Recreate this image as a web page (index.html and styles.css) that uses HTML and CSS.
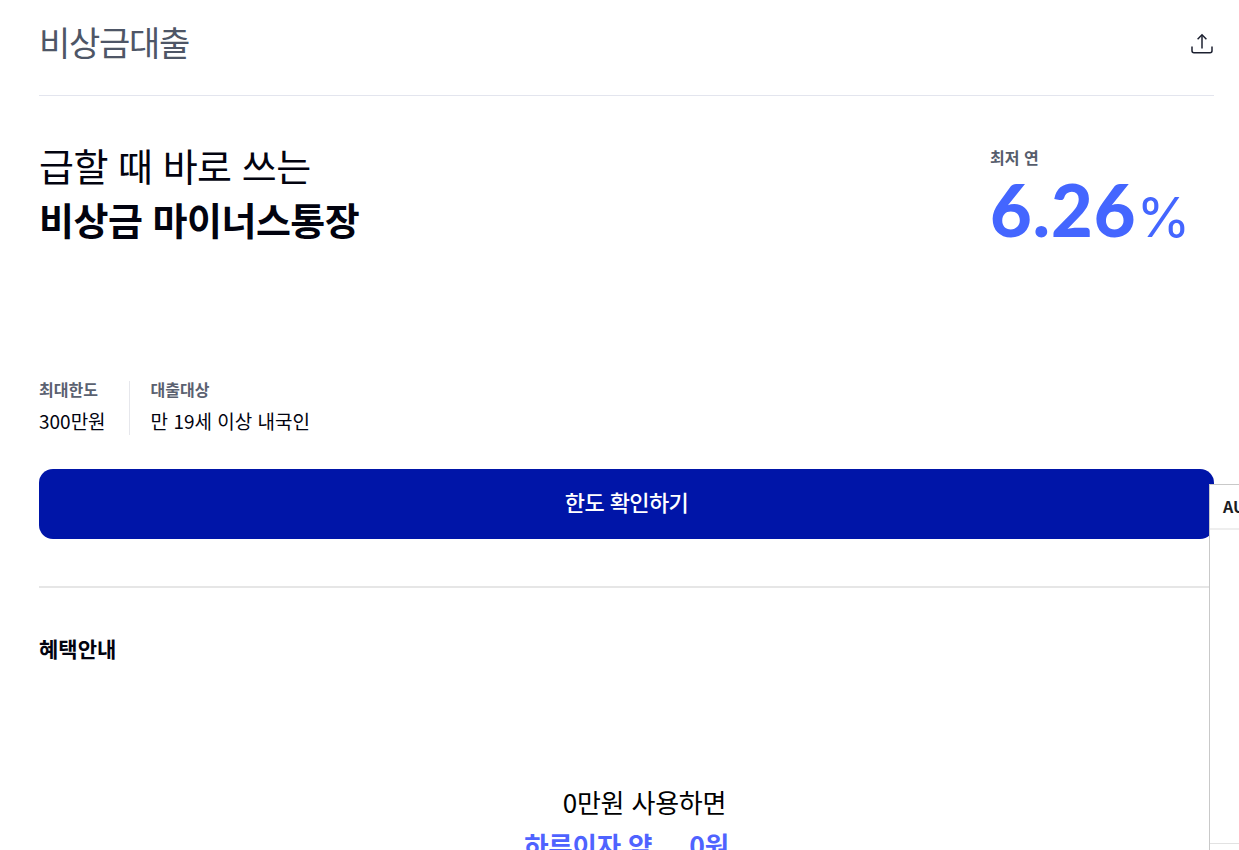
FILE: index.html
```html
<!DOCTYPE html>
<html lang="ko">
<head>
  <meta charset="UTF-8" />
  <meta name="viewport" content="width=device-width, initial-scale=1" />
  <title>비상금대출</title>
  <link rel="stylesheet" href="styles.css">
</head>
<body>
  <main class="page">
    <header class="top-bar">
      <h1>비상금대출</h1>
      <button class="share-btn" type="button" aria-label="공유">
        <svg width="24" height="24" viewBox="0 0 24 24" fill="none" stroke="#1c2030" stroke-width="1.5">
          <path d="M12 16.5V3" />
          <path d="M7.6 7.2 12 2.8l4.4 4.4" />
          <path d="M2 14.5v4.2a2 2 0 0 0 2 2h16a2 2 0 0 0 2-2v-4.2" />
        </svg>
      </button>
    </header>

    <section class="product">
      <h2 class="product-title">
        <span>급할 때 바로 쓰는</span>
        <strong>비상금 마이너스통장</strong>
      </h2>
      <div class="rate">
        <p class="rate-label">최저 연</p>
        <p class="rate-value">6.26<span>%</span></p>
      </div>
    </section>

    <dl class="facts">
      <div class="fact">
        <dt>최대한도</dt>
        <dd>300만원</dd>
      </div>
      <div class="fact">
        <dt>대출대상</dt>
        <dd>만 19세 이상 내국인</dd>
      </div>
    </dl>

    <button class="cta" type="button">한도 확인하기</button>

    <section class="benefit">
      <h3>혜택안내</h3>
      <div class="calc">
        <p class="calc-lead">0만원 사용하면</p>
        <p class="calc-result"><span>하루이자 약</span><span>0원</span></p>
      </div>
    </section>
  </main>

  <aside class="side-panel">
    <div class="side-head">AUTO</div>
    <div class="side-body"></div>
    <div class="side-foot"></div>
  </aside>
</body>
</html>
```

FILE: styles.css
```css
html, body {
  height: 850px;
  overflow: hidden;
}
body {
  margin: 0;
  background: #fff;
  color: #000;
  font-family: "Noto Sans CJK KR", "Noto Sans", sans-serif;
}
p, h1, h2, h3, dl, dd {
  margin: 0;
}
.page {
  padding: 0 25px 0 39px;
}
.top-bar {
  display: flex;
  justify-content: space-between;
  align-items: center;
  height: 96px;
  border-bottom: 1px solid #e3e5ee;
  padding-bottom: 13px;
  box-sizing: border-box;
}
.top-bar h1 {
  font-size: 34px;
  font-weight: 400;
  letter-spacing: -1.28px;
  color: #4e5666;
}
.share-btn {
  display: flex;
  margin-top: 5px;
  background: none;
  border: 0;
  padding: 0;
}
.product {
  display: flex;
  justify-content: space-between;
  padding-top: 41px;
  height: 243px;
  box-sizing: border-box;
}
.product-title {
  display: flex;
  flex-direction: column;
  font-size: 38px;
  font-weight: 400;
  line-height: 55px;
  letter-spacing: -0.5px;
  color: #02030f;
}
.product-title strong {
  margin-top: -1px;
  font-weight: 700;
  letter-spacing: -0.5px;
}
.rate {
  width: 224px;
  padding-top: 8px;
}
.rate-label {
  font-size: 16px;
  font-weight: 700;
  line-height: 24px;
  color: #565d6c;
}
.rate-value {
  font-family: "Lato", sans-serif;
  font-size: 72px;
  font-weight: 900;
  line-height: 70px;
  margin-top: 5px;
  letter-spacing: 1px;
  color: #4466ff;
}
.rate-value span {
  font-family: "Inter", sans-serif;
  font-size: 55px;
  font-weight: 400;
  letter-spacing: -2.5px;
}
.facts {
  display: flex;
  height: 54px;
  margin-top: 42px;
}
.fact {
  padding-right: 23px;
}
.fact + .fact {
  padding-left: 21px;
  border-left: 1px solid #e6e7ec;
}
.fact dt {
  font-size: 16px;
  font-weight: 700;
  line-height: 16px;
  color: #5a6170;
}
.fact dd {
  margin-top: 11px;
  font-size: 19px;
  line-height: 26px;
  color: #02030f;
}
.cta {
  display: block;
  width: 100%;
  height: 70px;
  margin-top: 34px;
  padding: 0 0 7px;
  border: 0;
  border-radius: 14px;
  background: #0015a8;
  color: #fff;
  font-family: inherit;
  font-size: 22px;
  font-weight: 500;
  letter-spacing: -0.6px;
}
.benefit {
  margin-top: 47px;
  border-top: 2px solid #e6e6e6;
  padding-top: 45px;
}
.benefit h3 {
  font-size: 21px;
  font-weight: 700;
  line-height: 30px;
  color: #02030f;
}
.calc {
  margin-top: 119px;
  text-align: center;
  font-size: 26px;
  line-height: 40px;
  letter-spacing: -0.2px;
}
.calc-lead {
  padding-left: 36px;
}
.calc-result {
  display: flex;
  justify-content: center;
  gap: 37px;
  margin-top: 3px;
  font-size: 26.5px;
  font-weight: 700;
  color: #4f63ff;
}
/* chat widget stuck to the right edge */
.side-panel {
  position: fixed;
  left: 1209px;
  top: 484px;
  width: 300px;
  height: 400px;
  background: #fff;
  border: 1px solid #c9c9c9;
  box-sizing: border-box;
}
.side-head {
  height: 43px;
  padding-left: 13px;
  border-bottom: 2px solid #eeeeee;
  font-size: 16px;
  font-weight: 700;
  line-height: 43px;
  color: #1b1b22;
}
.side-body {
  height: 313px;
}
.side-foot {
  border-top: 1px solid #e2e2e2;
}
```
